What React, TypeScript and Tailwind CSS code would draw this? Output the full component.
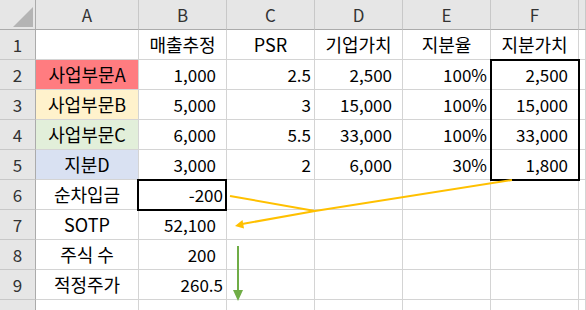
import React from 'react';

type Cell = { t: string; align?: 'c' | 'r'; wide?: boolean };

const cols = ['A', 'B', 'C', 'D', 'E', 'F', ''];

const rowBg: Record<number, string> = {
  2: 'bg-[#ff7c80]',
  3: 'bg-[#fff2cc]',
  4: 'bg-[#e2efda]',
  5: 'bg-[#d9e1f2]',
};

// wide = accounting style number (extra right padding)
const data: Cell[][] = [
  [
    { t: '', align: 'c' },
    { t: '매출추정', align: 'c' },
    { t: 'PSR', align: 'c' },
    { t: '기업가치', align: 'c' },
    { t: '지분율', align: 'c' },
    { t: '지분가치', align: 'c' },
  ],
  [
    { t: '사업부문A', align: 'c' },
    { t: '1,000', wide: true },
    { t: '2.5' },
    { t: '2,500', wide: true },
    { t: '100%' },
    { t: '2,500', wide: true },
  ],
  [
    { t: '사업부문B', align: 'c' },
    { t: '5,000', wide: true },
    { t: '3' },
    { t: '15,000', wide: true },
    { t: '100%' },
    { t: '15,000', wide: true },
  ],
  [
    { t: '사업부문C', align: 'c' },
    { t: '6,000', wide: true },
    { t: '5.5' },
    { t: '33,000', wide: true },
    { t: '100%' },
    { t: '33,000', wide: true },
  ],
  [
    { t: '지분D', align: 'c' },
    { t: '3,000', wide: true },
    { t: '2' },
    { t: '6,000', wide: true },
    { t: '30%' },
    { t: '1,800', wide: true },
  ],
  [{ t: '순차입금', align: 'c' }, { t: '-200' }],
  [{ t: 'SOTP', align: 'c' }, { t: '52,100', wide: true }],
  [{ t: '주식 수', align: 'c' }, { t: '200', wide: true }],
  [{ t: '적정주가', align: 'c' }, { t: '260.5' }],
  [],
];

const font = { fontFamily: '"Noto Sans CJK KR", "Noto Sans", sans-serif' };

function DataCell({ cell, bg }: { cell?: Cell; bg?: string }) {
  const align = cell?.align === 'c' ? 'justify-center text-[18px]' : 'justify-end text-[17px]';
  const pad = cell?.align === 'c' ? '' : cell?.wide ? 'pr-[10px]' : 'pr-[3px]';
  return (
    <div
      className={`h-[30px] border-r border-b border-[#d4d4d4] flex items-center ${align} ${pad} ${bg ?? 'bg-white'} text-black whitespace-nowrap overflow-hidden`}
    >
      {cell?.t}
    </div>
  );
}

export default function App() {
  return (
    <div className="relative w-[586px] h-[310px] overflow-hidden bg-white" style={font}>
      <div className="grid grid-cols-[36px_103px_88px_88px_88px_88px_88px_1fr]">
        {/* corner */}
        <div className="h-[30px] bg-[#e6e6e6] border-r border-b border-[#ababab] relative">
          <svg width="36" height="30" className="absolute inset-0">
            <polygon points="33,7 33,27 13,27" fill="#b4b4b4" />
          </svg>
        </div>
        {/* column headers */}
        {cols.map((c, i) => (
          <div
            key={'h' + i}
            className="h-[30px] bg-[#e6e6e6] border-r border-[#c8c8c8] border-b-[#ababab] border-b flex items-center justify-center text-[17px] text-[#333]"
          >
            {c}
          </div>
        ))}

        {data.map((row, r) => (
          <React.Fragment key={r}>
            <div className="h-[30px] bg-[#e6e6e6] border-r border-r-[#ababab] border-b border-b-[#c8c8c8] flex items-center justify-center text-[17px] text-[#333]">
              {r < 9 ? r + 1 : ''}
            </div>
            {cols.map((_, c) => (
              <DataCell
                key={c}
                cell={row[c]}
                bg={c === 0 ? rowBg[r + 1] : undefined}
              />
            ))}
          </React.Fragment>
        ))}
      </div>

      {/* selection borders */}
      <div className="absolute left-[490px] top-[59px] w-[90px] h-[122px] border-2 border-black pointer-events-none" />
      <div className="absolute left-[137px] top-[179px] w-[90px] h-[32px] border-2 border-black pointer-events-none" />

      {/* arrows */}
      <svg width="586" height="310" className="absolute inset-0 pointer-events-none">
        <line x1="230" y1="196" x2="315" y2="211" stroke="#ffc000" strokeWidth="2" />
        <polyline points="512,180 315,211 242,224" fill="none" stroke="#ffc000" strokeWidth="2" />
        <polygon points="235,226 244,228.5 242.5,220" fill="#ffc000" />
        <line x1="238" y1="246" x2="238" y2="292" stroke="#70ad47" strokeWidth="2" />
        <polygon points="233,290 243,290 238,301" fill="#70ad47" />
      </svg>
    </div>
  );
}
